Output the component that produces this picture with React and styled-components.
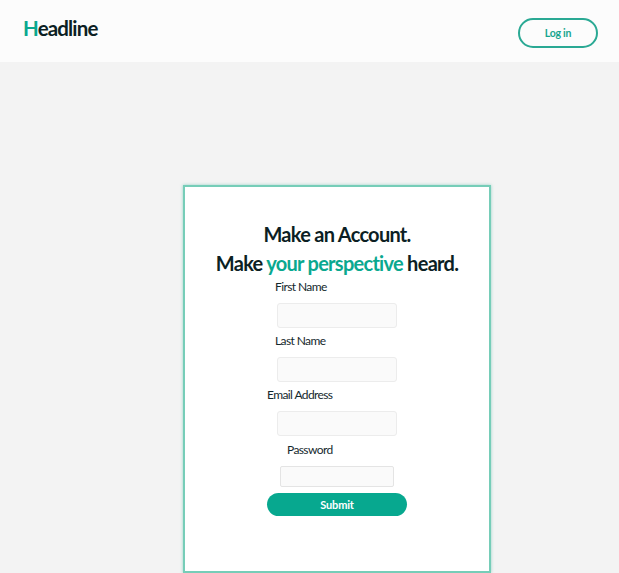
import React from 'react'
import styled, { createGlobalStyle } from 'styled-components'

const GlobalStyle = createGlobalStyle`
  html, body {
    margin: 0;
    height: 100%;
    overflow: hidden;
    background: #f3f3f3;
    font-family: 'Lato', 'Liberation Sans', sans-serif;
    color: #0f2027;
  }
`

const Header = styled.header`
  height: 62px;
  background: #fcfcfc;
  display: flex;
  align-items: center;
  justify-content: space-between;
  padding: 0 21px 0 23px;
  box-sizing: border-box;
`

const Logo = styled.div`
  font-size: 20.5px;
  font-weight: 700;
  letter-spacing: -0.85px;
  margin-top: -6px;
  color: #0c1f24;
`

const Accent = styled.span`
  color: #0aa88f;
`

const LoginButton = styled.button`
  width: 80px;
  height: 30px;
  margin-top: 3px;
  border: 2px solid #2aa994;
  border-radius: 15px;
  background: transparent;
  color: #17a58e;
  font-family: inherit;
  font-size: 10.5px;
  font-weight: 700;
  letter-spacing: -0.2px;
  padding: 0;
`

const Main = styled.main`
  display: flex;
  justify-content: center;
  padding: 123px 0 0 55px;
`

const Card = styled.section`
  width: 308px;
  height: 388px;
  box-sizing: border-box;
  background: #fff;
  border: 2px solid #76cdb8;
  box-shadow: 0 0 3px rgba(90, 190, 170, 0.6);
  padding-top: 33px;
  display: flex;
  flex-direction: column;
  align-items: center;
`

const Title = styled.h1`
  margin: 0;
  font-size: 20px;
  line-height: 29px;
  font-weight: 700;
  letter-spacing: -0.72px;
  text-align: center;
  color: #0c1f24;
`

const Form = styled.form`
  width: 140px;
  display: flex;
  flex-direction: column;
  align-items: flex-start;
  margin-top: 1px;
`

const Label = styled.label`
  display: block;
  font-size: 12px;
  line-height: 15px;
  letter-spacing: -0.6px;
  color: #14282d;
  margin-left: ${p => p.$indent}px;
`

const Input = styled.input`
  display: block;
  box-sizing: border-box;
  width: 120px;
  height: 25px;
  margin: 9px 0 5.2px 10px;
  background: #fafafa;
  border: 1px solid #ececec;
  border-radius: 3px;
  padding: 0;
`

const PasswordInput = styled.input`
  display: block;
  box-sizing: border-box;
  width: 114px;
  height: 21px;
  margin: 9px 0 6px 13px;
  background: #fafafa;
  border: 1.5px solid #e4e4e4;
  border-radius: 2px;
  padding: 0;
`

const Submit = styled.button`
  width: 140px;
  height: 23px;
  border: 0;
  border-radius: 12px;
  background: #07a88f;
  color: #fff;
  font-family: inherit;
  font-size: 11px;
  font-weight: 700;
  letter-spacing: -0.2px;
  padding: 0;
`

export default function App() {
  return (
    <>
      <GlobalStyle />
      <Header>
        <Logo><Accent>H</Accent>eadline</Logo>
        <LoginButton>Log in</LoginButton>
      </Header>
      <Main>
        <Card>
          <Title>
            Make an Account.<br />
            Make <Accent>your perspective</Accent> heard.
          </Title>
          <Form onSubmit={e => e.preventDefault()}>
            <Label $indent={8}>First Name</Label>
            <Input type="text" />
            <Label $indent={8}>Last Name</Label>
            <Input type="text" />
            <Label $indent={0}>Email Address</Label>
            <Input type="text" />
            <Label $indent={20}>Password</Label>
            <PasswordInput type="password" />
            <Submit>Submit</Submit>
          </Form>
        </Card>
      </Main>
    </>
  )
}
